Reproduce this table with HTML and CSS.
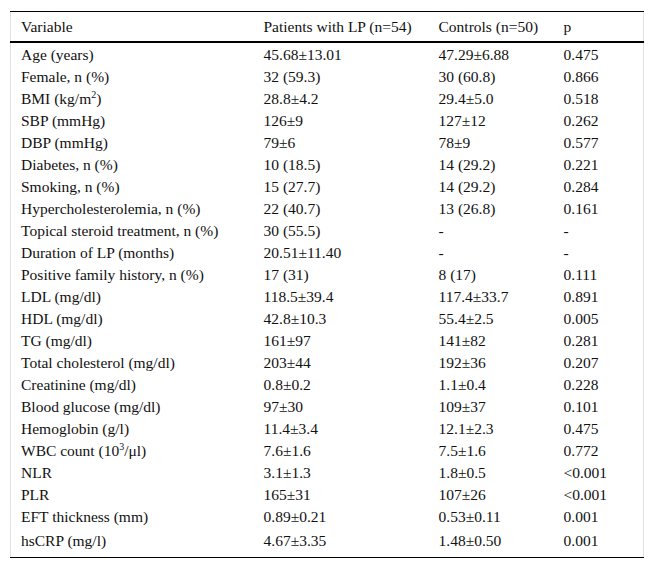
FILE: index.html
```html
<!DOCTYPE html>
<html>
<head>
<meta charset="utf-8">
<link rel="stylesheet" href="styles.css">
</head>
<body>
<div class="wrap">
<table class="data">
<colgroup>
<col class="c1"><col class="c2"><col class="c3"><col class="c4">
</colgroup>
<thead>
<tr><th>Variable</th><th>Patients with LP (n=54)</th><th>Controls (n=50)</th><th>p</th></tr>
</thead>
<tbody>
<tr><td>Age (years)</td><td>45.68±13.01</td><td>47.29±6.88</td><td>0.475</td></tr>
<tr><td>Female, n (%)</td><td>32 (59.3)</td><td>30 (60.8)</td><td>0.866</td></tr>
<tr><td>BMI (kg/m<sup>2</sup>)</td><td>28.8±4.2</td><td>29.4±5.0</td><td>0.518</td></tr>
<tr><td>SBP (mmHg)</td><td>126±9</td><td>127±12</td><td>0.262</td></tr>
<tr><td>DBP (mmHg)</td><td>79±6</td><td>78±9</td><td>0.577</td></tr>
<tr><td>Diabetes, n (%)</td><td>10 (18.5)</td><td>14 (29.2)</td><td>0.221</td></tr>
<tr><td>Smoking, n (%)</td><td>15 (27.7)</td><td>14 (29.2)</td><td>0.284</td></tr>
<tr><td>Hypercholesterolemia, n (%)</td><td>22 (40.7)</td><td>13 (26.8)</td><td>0.161</td></tr>
<tr><td>Topical steroid treatment, n (%)</td><td>30 (55.5)</td><td>-</td><td>-</td></tr>
<tr><td>Duration of LP (months)</td><td>20.51±11.40</td><td>-</td><td>-</td></tr>
<tr><td>Positive family history, n (%)</td><td>17 (31)</td><td>8 (17)</td><td>0.111</td></tr>
<tr><td>LDL (mg/dl)</td><td>118.5±39.4</td><td>117.4±33.7</td><td>0.891</td></tr>
<tr><td>HDL (mg/dl)</td><td>42.8±10.3</td><td>55.4±2.5</td><td>0.005</td></tr>
<tr><td>TG (mg/dl)</td><td>161±97</td><td>141±82</td><td>0.281</td></tr>
<tr><td>Total cholesterol (mg/dl)</td><td>203±44</td><td>192±36</td><td>0.207</td></tr>
<tr><td>Creatinine (mg/dl)</td><td>0.8±0.2</td><td>1.1±0.4</td><td>0.228</td></tr>
<tr><td>Blood glucose (mg/dl)</td><td>97±30</td><td>109±37</td><td>0.101</td></tr>
<tr><td>Hemoglobin (g/l)</td><td>11.4±3.4</td><td>12.1±2.3</td><td>0.475</td></tr>
<tr><td>WBC count (10<sup>3</sup>/μl)</td><td>7.6±1.6</td><td>7.5±1.6</td><td>0.772</td></tr>
<tr><td>NLR</td><td>3.1±1.3</td><td>1.8±0.5</td><td>&lt;0.001</td></tr>
<tr><td>PLR</td><td>165±31</td><td>107±26</td><td>&lt;0.001</td></tr>
<tr><td>EFT thickness (mm)</td><td>0.89±0.21</td><td>0.53±0.11</td><td>0.001</td></tr>
<tr class="last"><td>hsCRP (mg/l)</td><td>4.67±3.35</td><td>1.48±0.50</td><td>0.001</td></tr>
</tbody>
</table>
</div>
</body>
</html>
```
FILE: styles.css
```css
html, body {
  margin: 0;
  padding: 0;
  background: #fff;
}
.wrap {
  padding: 11px 10px 0 10px;
}
.data {
  width: 634px;
  border-collapse: collapse;
  border-left: 1px solid #e2e2e2;
  border-right: 1px solid #e2e2e2;
  font-family: "Liberation Serif", "Times New Roman", serif;
  font-size: 15.5px;
  color: #111;
}
.c1 { width: 243px; }
.c2 { width: 175px; }
.c3 { width: 125px; }
.c4 { width: auto; }
.data th {
  font-weight: normal;
  text-align: left;
  padding: 0 0 0 10px;
  height: 29px;
  line-height: 17px;
  border-top: 1px solid #000;
  border-bottom: 2px solid #000;
  vertical-align: middle;
}
.data td {
  text-align: left;
  padding: 0 0 0 10px;
  height: 22px;
  vertical-align: middle;
  line-height: 17px;
}
.data tr.last td {
  height: 26px;
  padding-bottom: 4px;
  border-bottom: 1px solid #000;
}
.data sup {
  font-size: 10px;
  line-height: 0;
  vertical-align: 6px;
}
```
